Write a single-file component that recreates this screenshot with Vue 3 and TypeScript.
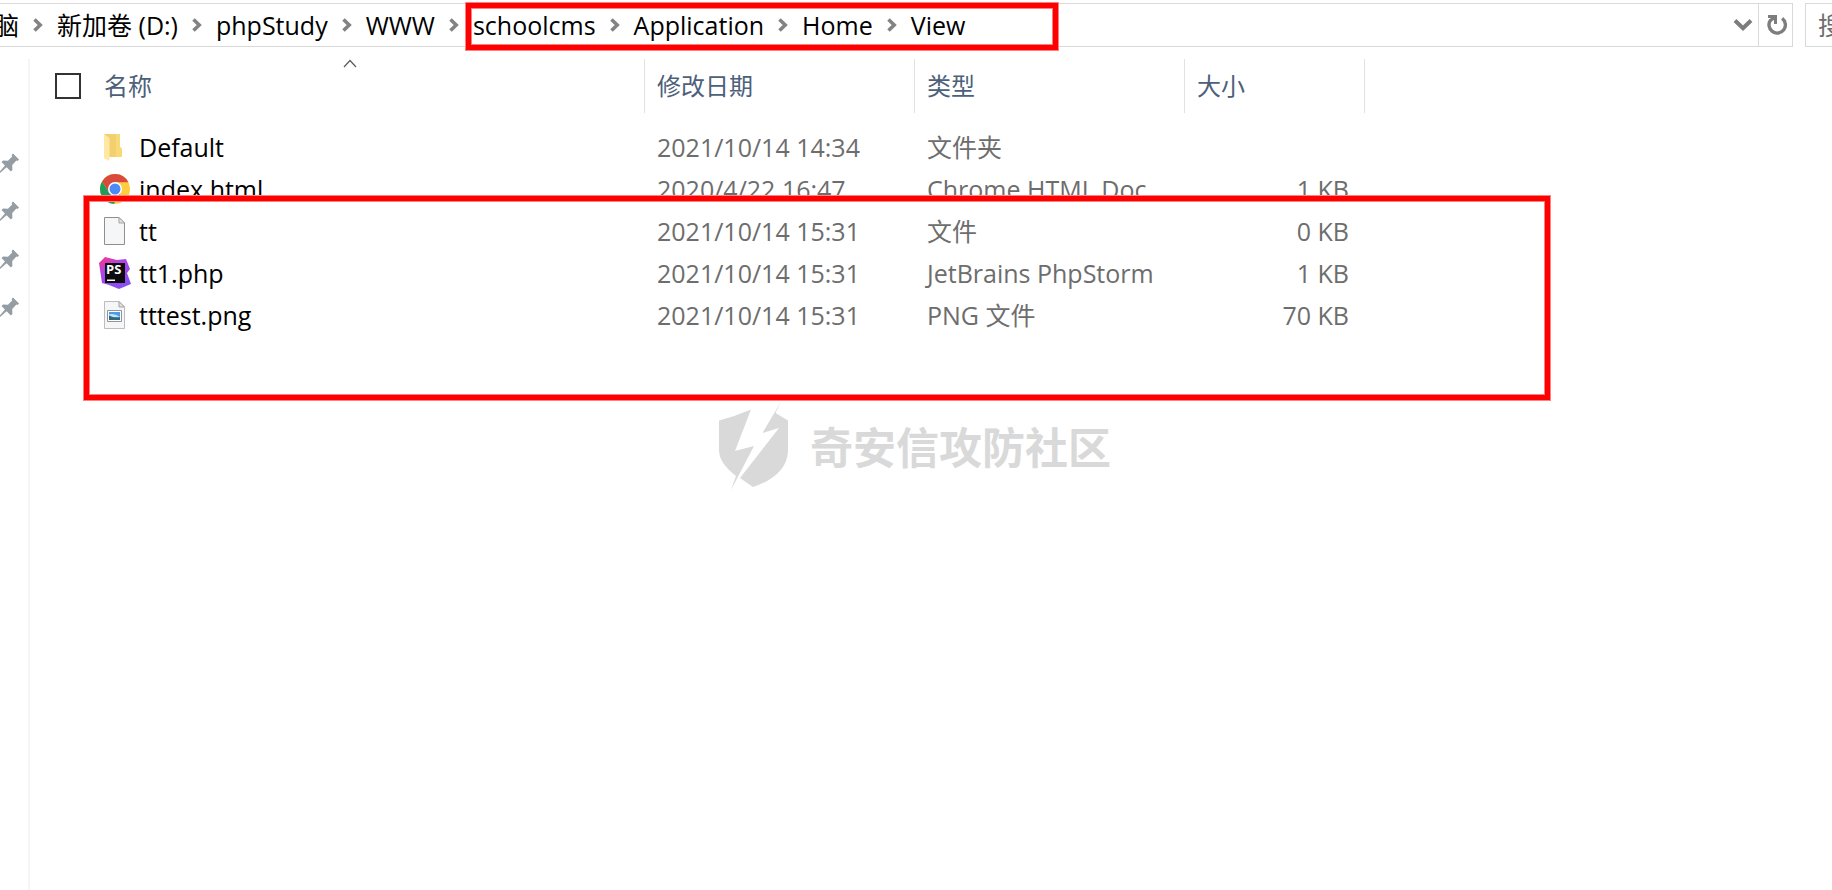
<script setup lang="ts">
type Kind = 'folder' | 'chrome' | 'blank' | 'phpstorm' | 'image'

interface Entry {
  name: string
  kind: Kind
  modified: string
  type: string
  size: string
}

const crumbs: string[] = ['脑', '新加卷 (D:)', 'phpStudy', 'WWW', 'schoolcms', 'Application', 'Home', 'View']

const entries: Entry[] = [
  { name: 'Default', kind: 'folder', modified: '2021/10/14 14:34', type: '文件夹', size: '' },
  { name: 'index.html', kind: 'chrome', modified: '2020/4/22 16:47', type: 'Chrome HTML Doc...', size: '1 KB' },
  { name: 'tt', kind: 'blank', modified: '2021/10/14 15:31', type: '文件', size: '0 KB' },
  { name: 'tt1.php', kind: 'phpstorm', modified: '2021/10/14 15:31', type: 'JetBrains PhpStorm', size: '1 KB' },
  { name: 'tttest.png', kind: 'image', modified: '2021/10/14 15:31', type: 'PNG 文件', size: '70 KB' },
]
</script>

<template>
  <div class="explorer">
    <header class="toolbar">
      <div class="address">
        <nav class="crumbs" aria-label="路径">
          <template v-for="(crumb, i) in crumbs" :key="crumb">
            <svg v-if="i > 0" class="sep" viewBox="0 0 10 14" aria-hidden="true">
              <path d="M1.5 1.5 7.2 7 1.5 12.5" fill="none" stroke="#838383" stroke-width="3.6" />
            </svg>
            <a href="#" class="crumb">{{ crumb }}</a>
          </template>
        </nav>
        <button class="tool history" aria-label="历史记录">
          <svg width="20" height="14" viewBox="0 0 20 14">
            <path d="M2 2.5 10 10.2 18 2.5" fill="none" stroke="#7d7d7d" stroke-width="4" />
          </svg>
        </button>
        <button class="tool refresh" aria-label="刷新">
          <svg width="22" height="24" viewBox="0 0 22 24">
            <path d="M16.1 5.3A8.2 8.2 0 1 1 4.6 7" fill="none" stroke="#7d7d7d" stroke-width="3.4" />
            <path d="M2 2h9v9H8V7L4.5 9 3 6.500 5 5H2z" fill="#7d7d7d" />
          </svg>
        </button>
      </div>
      <input class="search" type="text" placeholder="搜" aria-label="搜索" />
    </header>

    <div class="body">
      <aside class="pins">
        <svg v-for="n in 4" :key="n" class="pin" viewBox="0 0 20 20" aria-hidden="true">
          <path d="M13 0.5 19 6.5 17.5 8 16.4 7.6 12.2 12 12.4 17 10.9 18.5 6.6 14.2 0 20V18.2L5 12.6 1.5 9 3 7.6 8 7.8 12.2 3.6 11.6 2z" fill="#939da3" />
        </svg>
      </aside>

      <main class="files">
        <table>
          <colgroup>
            <col class="c-name" />
            <col class="c-date" />
            <col class="c-type" />
            <col class="c-size" />
            <col />
          </colgroup>
          <thead>
            <tr>
              <th scope="col" class="h-name">
                <div class="head">
                  <input type="checkbox" aria-label="全选" />
                  <span>名称</span>
                </div>
                <svg class="sort" width="14" height="9" viewBox="0 0 14 9" aria-hidden="true">
                  <path d="M1 8 7 1.5 13 8" fill="none" stroke="#5a5a5a" stroke-width="1.2" />
                </svg>
              </th>
              <th scope="col">修改日期</th>
              <th scope="col">类型</th>
              <th scope="col">大小</th>
              <td></td>
            </tr>
          </thead>
          <tbody>
            <tr v-for="entry in entries" :key="entry.name">
              <td class="name">
                <div class="label">
                  <svg v-if="entry.kind === 'folder'" class="icon" viewBox="0 0 32 32" aria-hidden="true">
                    <path d="M5 3H21V16L23 18V26H6z" fill="#f3cf6d" />
                    <path d="M17 3h4v13l2 2v8h-6z" fill="#f8d978" />
                    <path d="M5 3 10.500 7V27L10 30 5 27z" fill="#ffe8a6" />
                  </svg>
                  <svg v-else-if="entry.kind === 'chrome'" class="icon" viewBox="0 0 32 32" aria-hidden="true">
                    <circle cx="16" cy="16" r="15" fill="#ffcd41" />
                    <path d="M16 9.200H29.400A15 15 0 0 0 3 8.500L10.100 19.400z" fill="#d9493c" />
                    <path d="M3 8.500A15 15 0 0 0 14.800 31L21.900 19.400 16 22.800 10.100 19.400z" fill="#1e9e5c" />
                    <circle cx="16" cy="16" r="7" fill="#fff" />
                    <circle cx="16" cy="16" r="5.500" fill="#4c8bf5" />
                  </svg>
                  <svg v-else-if="entry.kind === 'phpstorm'" class="icon" viewBox="0 0 32 32" aria-hidden="true">
                    <defs>
                      <linearGradient id="storm" x1="0.150" y1="0" x2="0.700" y2="1">
                        <stop offset="0.050" stop-color="#ee3898" />
                        <stop offset="0.350" stop-color="#b044e8" />
                        <stop offset="1" stop-color="#8450f5" />
                      </linearGradient>
                    </defs>
                    <path d="M6 0 18 3 27 2 31 12 28 16 32 27 20 32 10 28 3 26 0 6z" fill="url(#storm)" />
                    <path d="M6 6H26V26H6z" fill="#0d0b10" />
                    <text x="7" y="17" class="ps">PS</text>
                    <path d="M8 22.500h8v1.500H8z" fill="#fff" />
                  </svg>
                  <svg v-else class="icon" viewBox="0 0 32 32" aria-hidden="true">
                    <path d="M5.500 2.500H20L25.500 8V29.500H5.500z" fill="#f5f6f7" :stroke="entry.kind === 'blank' ? '#8f8f8f' : '#bdbdbd'" />
                    <path d="M20 2.500V8H25.500z" fill="#e2e2e2" stroke="#a3a3a3" />
                    <g v-if="entry.kind === 'image'">
                      <path d="M8.500 11.500H22.500V22.500H8.500z" fill="#fff" stroke="#8e959b" />
                      <path d="M10 13H21V21H10z" fill="#4d9be6" />
                      <path d="M10 15.500Q15 14 21 18H10z" fill="#c4e4f8" />
                      <path d="M10 16.500 15 18.500H21V21H10z" fill="#33667b" />
                    </g>
                  </svg>
                  <span>{{ entry.name }}</span>
                </div>
              </td>
              <td>{{ entry.modified }}</td>
              <td>{{ entry.type }}</td>
              <td class="size">{{ entry.size }}</td>
              <td></td>
            </tr>
          </tbody>
        </table>
      </main>
    </div>

    <div class="watermark">
      <svg width="72" height="90" viewBox="0 0 72 90" aria-hidden="true">
        <path d="M2 20.500Q19 16 34 9.500L18 51 37 46 14 90 19 76Q2 63 2 50z" fill="#d9d9d9" />
        <path d="M64 1.500 58.500 13 71 20.500V52Q69 76 36 87L23 78 62 28 45.500 33z" fill="#d9d9d9" />
      </svg>
      <span>奇安信攻防社区</span>
    </div>

    <div class="mark mark-path"></div>
    <div class="mark mark-files"></div>
  </div>
</template>

<style>
body {
  margin: 0;
  background: #fff;
}
</style>

<style scoped>
.explorer {
  position: relative;
  display: flex;
  flex-direction: column;
  min-height: 100vh;
  overflow: hidden;
  font-family: 'Open Sans', 'Noto Sans CJK SC', sans-serif;
  font-size: 25px;
  line-height: 32px;
  color: #000;
}

.toolbar {
  display: flex;
  gap: 12px;
  height: 44px;
  margin-top: 3px;
}

.address {
  display: flex;
  flex: 1;
  min-width: 0;
  box-sizing: border-box;
  border: 1px solid #d9d9d9;
  border-left: 0;
}

.crumbs {
  display: flex;
  flex: 1;
  align-items: center;
  gap: 14px;
  min-width: 0;
  margin-left: -6px;
  overflow: hidden;
  white-space: nowrap;
}

.crumb {
  color: #000;
  text-decoration: none;
}

.sep {
  flex: none;
  width: 10px;
  height: 14px;
}

.tool {
  display: flex;
  align-items: center;
  justify-content: center;
  width: 34px;
  padding: 0;
  border: 0;
  background: none;
}

.history {
  padding-left: 4px;
}

.refresh {
  padding-left: 2px;
  border-left: 1px solid #d9d9d9;
}

.search {
  box-sizing: border-box;
  width: 27px;
  padding: 0 0 0 12px;
  border: 1px solid #d9d9d9;
  border-right: 0;
  font: inherit;
  outline: 0;
}

.search::placeholder {
  color: #6d6d6d;
  opacity: 1;
}

.body {
  display: flex;
  flex: 1;
  margin-top: 12px;
}

.pins {
  display: flex;
  flex-direction: column;
  gap: 28px;
  width: 28px;
  padding-top: 94px;
  border-right: 2px solid #f5f5f5;
}

.pin {
  width: 20px;
  height: 20px;
}

.files {
  flex: 1;
  min-width: 0;
}

table {
  width: 100%;
  border-collapse: separate;
  border-spacing: 0;
  table-layout: fixed;
}

.c-name {
  width: 614px;
}

.c-date,
.c-type {
  width: 270px;
}

.c-size {
  width: 180px;
}

th,
td {
  padding: 0 0 0 13px;
  text-align: left;
  white-space: nowrap;
}

thead th,
thead td {
  height: 54px;
}

th {
  padding-left: 12px;
  font-size: 24px;
  font-weight: 400;
  color: #4c607a;
}

th + th,
thead td {
  border-left: 1px solid #e2e2e2;
}

.h-name {
  position: relative;
  padding-left: 25px;
}

.head {
  display: flex;
  align-items: center;
  gap: 23px;
}

.head input {
  width: 26px;
  height: 26px;
  margin: 0;
  appearance: none;
  border: 2px solid #333;
  background: #fff;
}

.sort {
  position: absolute;
  top: 0;
  left: 51%;
}

tbody::before {
  content: '';
  display: block;
  height: 13px;
}

tbody td {
  height: 42px;
  color: #6d6d6d;
}

tbody .name {
  padding-left: 69px;
  color: #000;
}

tbody .size {
  padding: 0 15px 0 0;
  text-align: right;
}

.label {
  display: flex;
  align-items: center;
  gap: 8px;
}

.icon {
  width: 32px;
  height: 32px;
}

.ps {
  font-family: 'Open Sans', sans-serif;
  font-size: 13px;
  font-weight: 700;
  fill: #fff;
}

.watermark {
  position: absolute;
  inset: 0;
  display: flex;
  align-items: center;
  justify-content: center;
  gap: 21px;
  padding-right: 4px;
  font-family: 'Noto Sans CJK SC', sans-serif;
  font-size: 43px;
  font-weight: 700;
  line-height: 48px;
  color: #d9d9d9;
  pointer-events: none;
}

.mark {
  position: absolute;
  box-sizing: border-box;
  border: 5px solid #f00;
  box-shadow: 0 0 0 1px #ff8080, inset 0 0 0 1px #ff8080;
  pointer-events: none;
}

.mark-path {
  top: 3px;
  left: 466px;
  width: 592px;
  height: 47px;
}

.mark-files {
  top: 196px;
  left: 84px;
  width: 1466px;
  height: 204px;
}
</style>
